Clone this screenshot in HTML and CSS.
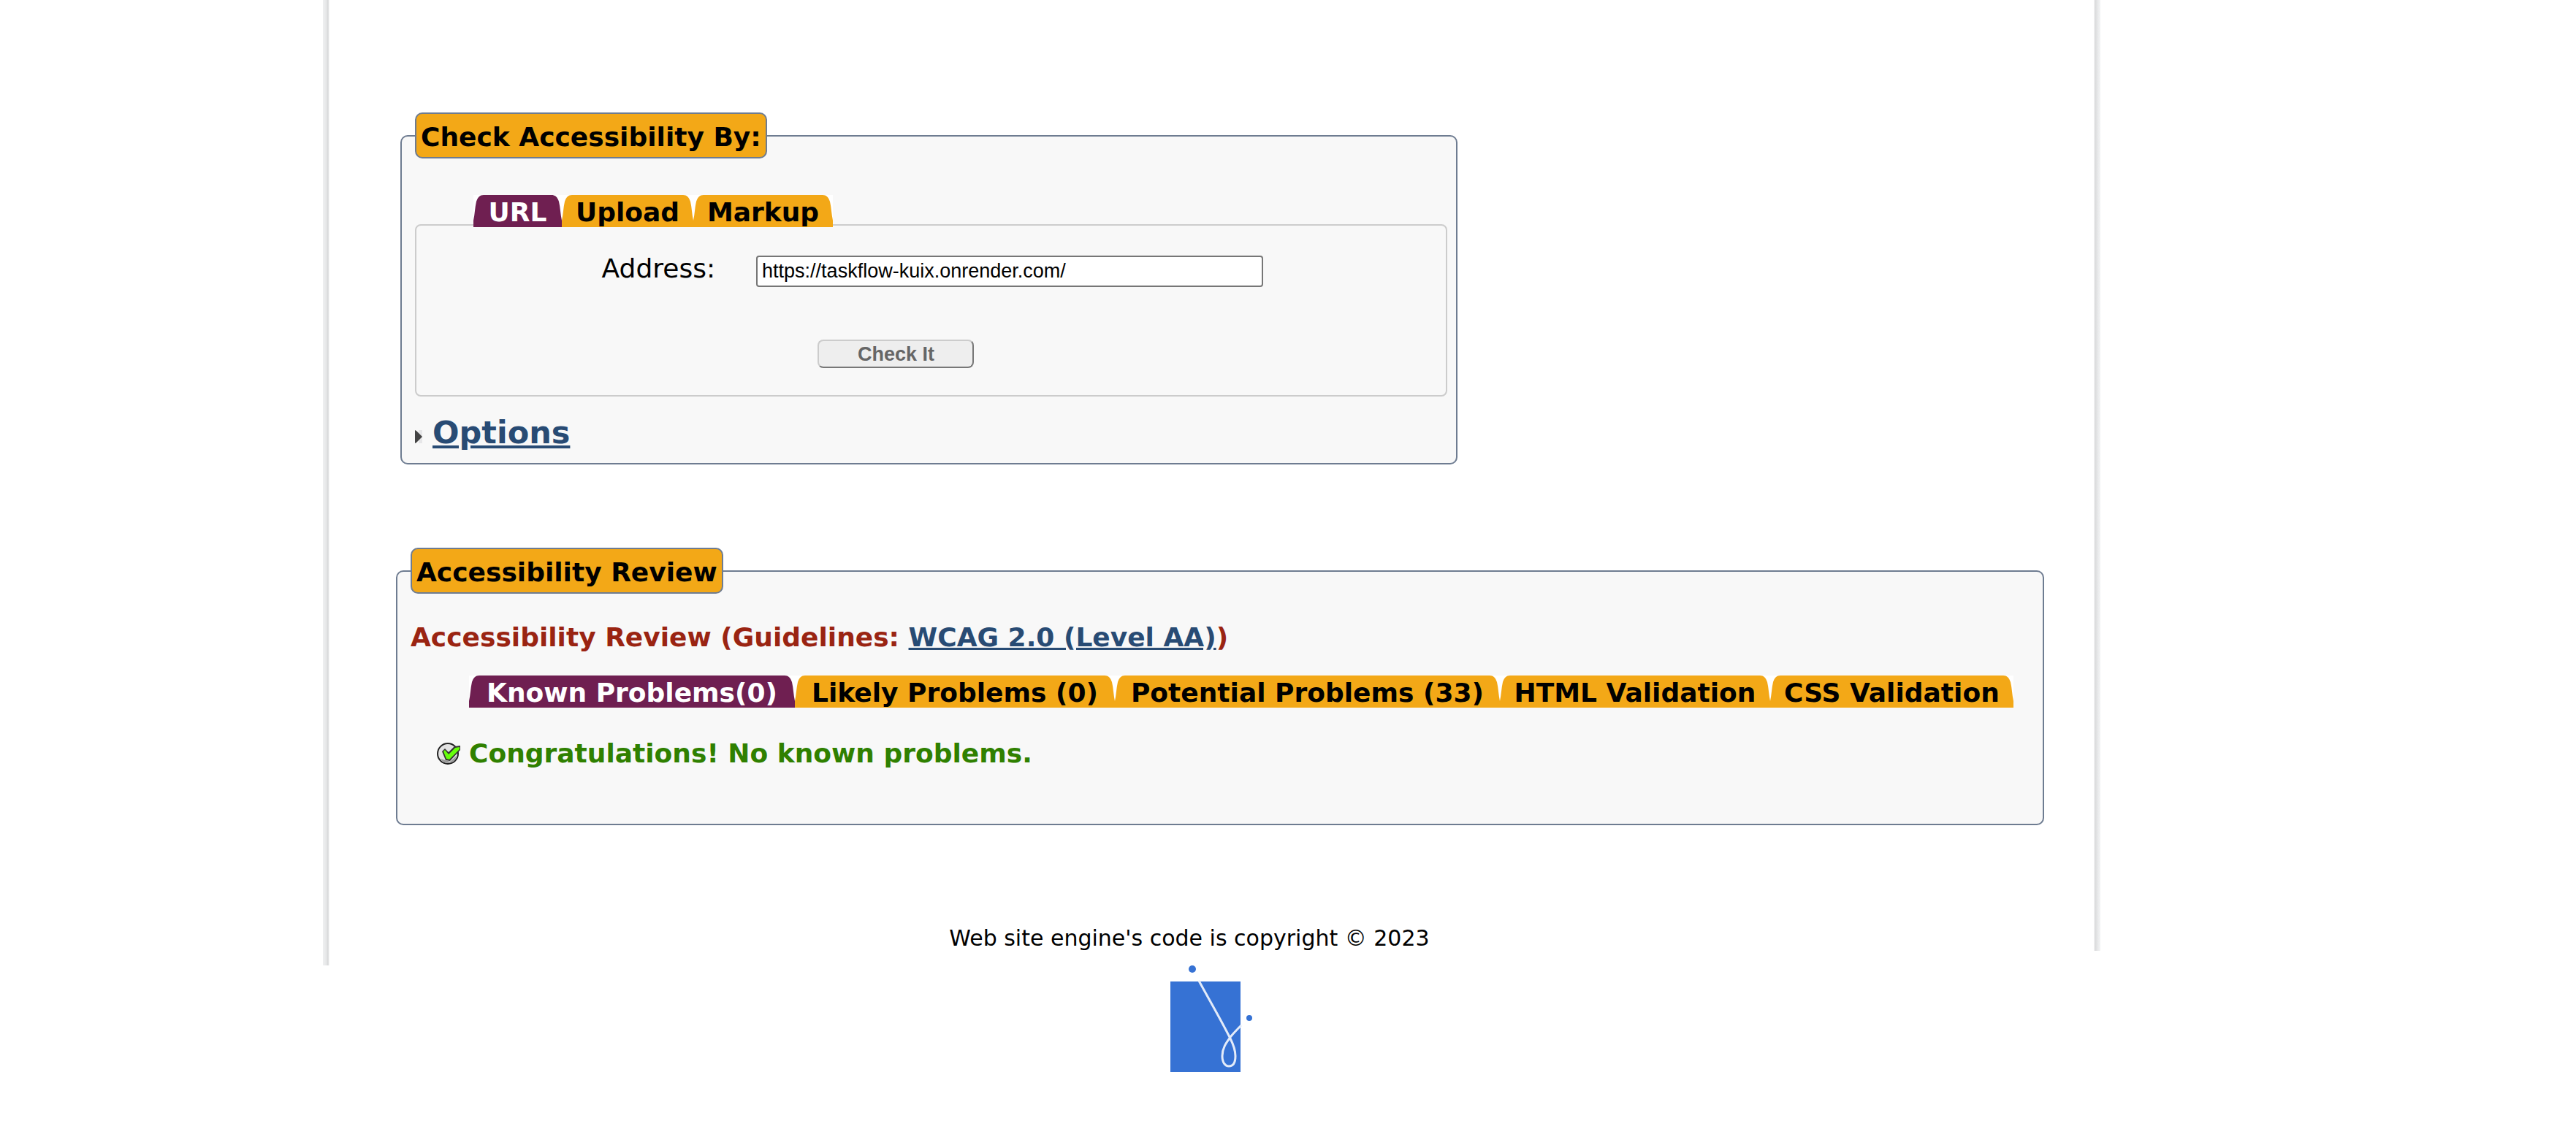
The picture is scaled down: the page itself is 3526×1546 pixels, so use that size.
FILE: index.html
```html
<!DOCTYPE html>
<html lang="en">
<head>
<meta charset="utf-8">
<title>Accessibility Checker</title>
<link rel="stylesheet" href="styles.css">
</head>
<body>
<svg class="defs" aria-hidden="true">
  <symbol id="cap-left" viewBox="0 0 14 44"><path d="M0 44V35C2 26 2 17 4 9C6 3 9 0 14 0V44Z"/></symbol>
  <symbol id="cap-right" viewBox="0 0 14 44"><path d="M14 44V35C12 26 12 17 10 9C8 3 5 0 0 0V44Z"/></symbol>
</svg>
<div class="page">
  <div class="rail rail-left"></div>
  <main class="content">
    <form>
      <fieldset class="box check">
        <legend>Check Accessibility By:</legend>
        <nav class="tabs input-tabs">
          <a class="tab active" href="#url"><svg class="cap"><use href="#cap-left"/></svg><span>URL</span><svg class="cap"><use href="#cap-right"/></svg></a>
          <a class="tab" href="#upload"><svg class="cap"><use href="#cap-left"/></svg><span>Upload</span><svg class="cap"><use href="#cap-right"/></svg></a>
          <a class="tab" href="#markup"><svg class="cap"><use href="#cap-left"/></svg><span>Markup</span><svg class="cap"><use href="#cap-right"/></svg></a>
        </nav>
        <div class="panel" id="url">
          <div class="field">
            <label for="address">Address:</label>
            <input id="address" type="text" value="https://taskflow-kuix.onrender.com/">
          </div>
          <button class="submit" type="button">Check It</button>
        </div>
        <h2 class="options">
          <svg class="arrow" viewBox="0 0 10 18" aria-hidden="true"><path d="M5 0H10V18H5Z" fill="#e6e6e8"/><path d="M0 0L2 1L10 9L2 17L0 18Z" fill="#444"/></svg>
          <a href="#options">Options</a>
        </h2>
      </fieldset>
    </form>
    <fieldset class="box review">
      <legend>Accessibility Review</legend>
      <h3 class="guidelines">Accessibility Review (Guidelines: <a href="#wcag">WCAG 2.0 (Level AA)</a>)</h3>
      <nav class="tabs result-tabs">
        <a class="tab active" href="#known"><svg class="cap"><use href="#cap-left"/></svg><span>Known Problems(0)</span><svg class="cap"><use href="#cap-right"/></svg></a>
        <a class="tab" href="#likely"><svg class="cap"><use href="#cap-left"/></svg><span>Likely Problems (0)</span><svg class="cap"><use href="#cap-right"/></svg></a>
        <a class="tab" href="#potential"><svg class="cap"><use href="#cap-left"/></svg><span>Potential Problems (33)</span><svg class="cap"><use href="#cap-right"/></svg></a>
        <a class="tab" href="#html"><svg class="cap"><use href="#cap-left"/></svg><span>HTML Validation</span><svg class="cap"><use href="#cap-right"/></svg></a>
        <a class="tab" href="#css"><svg class="cap"><use href="#cap-left"/></svg><span>CSS Validation</span><svg class="cap"><use href="#cap-right"/></svg></a>
      </nav>
      <p class="result" id="known">
        <svg class="tick" viewBox="0 0 32 30" aria-hidden="true">
          <circle cx="15" cy="15" r="14" fill="#e2e2e2" stroke="#222" stroke-width="2"/>
          <path d="M5 22A12 12 0 0 0 27 18L18 26Z" fill="#999"/>
          <path d="M7 12L11 8L16 13L24 5L32 4V10L18 25L12 24Z" fill="#333"/>
          <path d="M9 12L11 10L16 16L25 7L31 6V9L17 23L13 22Z" fill="#66ff0a"/>
        </svg>
        <span>Congratulations! No known problems.</span>
      </p>
    </fieldset>
    <p class="copyright">Web site engine's code is copyright © 2023</p>
  </main>
  <div class="rail rail-right"></div>
</div>
<footer class="footer">
  <svg class="logo" viewBox="0 0 112 146" role="img" aria-label="Logo">
    <rect x="0" y="22" width="96" height="124" fill="#3672d4"/>
    <circle cx="30" cy="5" r="5" fill="#3672d4"/>
    <circle cx="108" cy="72" r="4" fill="#3672d4"/>
    <path d="M39 21C52 45 68 72 82 100C87 110 89 117 89 124C89 134 85 138 80 138C75 138 71 133 71 124C71 112 78 104 83 97C88 91 92 87 97 82" fill="none" stroke="#e3ebf9" stroke-width="3"/>
  </svg>
</footer>
</body>
</html>
```
FILE: styles.css
```css
* {
  box-sizing: border-box;
}

body {
  margin: 0;
  background: #fff;
  color: #000;
  font-family: Verdana, "DejaVu Sans", sans-serif;
  font-size: 36px;
  line-height: 42px;
}

.defs {
  display: none;
}

a {
  color: #284b74;
}

.page {
  display: grid;
  grid-template-columns: 9px 1fr 9px;
  width: 69%;
  margin-left: 442px;
}

.rail-left {
  background: linear-gradient(to right, #eff0f1, #e6e7e8 50%, #d6d7d8 80%, #f4f4f5 90%);
}

.rail-right {
  margin-bottom: 20px;
  background: linear-gradient(to right, #f0f0f1 10%, #d9dadb 20%, #e8e9ea 60%, #f3f4f5);
}

.content {
  padding: 154px 68px 16px 91px;
}

.box {
  min-width: 0;
  margin: 0;
  border: 2px solid #6e7c91;
  border-radius: 10px;
  background: #f8f8f8;
}

.box legend {
  padding: 11px 6px 6px;
  border: 2px solid #6e7c91;
  border-radius: 10px;
  background: #f3a817;
  font-weight: bold;
}

.check {
  width: calc(64% + 3px);
  margin-left: 6px;
  padding: 50px 12px 16px 18px;
}

.review {
  margin-top: 114px;
  padding: 39px 20px 75px 18px;
}

.tabs {
  display: grid;
  margin-left: 80px;
}

.input-tabs {
  position: relative;
  grid-template-columns: 121fr 180fr 191fr;
  width: 492px;
  margin-bottom: -4px;
}

.result-tabs {
  grid-template-columns: 446fr 438fr 527fr 370fr 333fr;
  margin-top: 31px;
  margin-right: 20px;
}

.tab {
  display: flex;
  height: 44px;
  background: #fff;
  color: #000;
  fill: #f3a817;
  font-weight: bold;
  text-decoration: none;
}

.tab span {
  flex: 1;
  padding-top: 4px;
  background: #f3a817;
  line-height: 40px;
  text-align: center;
  white-space: nowrap;
}

.tab.active {
  color: #fff;
  fill: #6f1f51;
}

.tab.active span {
  background: #6f1f51;
}

.cap {
  flex: none;
  width: 14px;
  height: 44px;
}

.panel {
  padding: 38px 0 37px;
  border: 2px solid #ccc;
  border-radius: 8px;
}

.field {
  display: flex;
  align-items: baseline;
  gap: 56px;
  padding-left: 18%;
}

.field input {
  width: 694px;
  height: 43px;
  padding: 0 6px;
  border: 2px solid #767676;
  border-radius: 4px;
  background: #fff;
  color: #000;
  font-family: Arial, "Liberation Sans", sans-serif;
  font-size: 27px;
}

.submit {
  display: block;
  width: 214px;
  height: 39px;
  margin: 72px 0 0 39%;
  padding: 0;
  border: 2px solid;
  border-color: #ccc #777 #777 #ccc;
  border-radius: 8px;
  background: #eee;
  color: #666;
  font-family: Arial, "Liberation Sans", sans-serif;
  font-size: 27px;
  font-weight: bold;
  line-height: 30px;
}

.options {
  display: flex;
  align-items: center;
  gap: 14px;
  margin: 23px 0 0;
  font-size: 43px;
  line-height: 52px;
}

.arrow {
  width: 10px;
  height: 18px;
  margin-top: 12px;
}

.guidelines {
  margin: 0;
  color: #9a2412;
  font-size: 36px;
}

.result {
  display: flex;
  align-items: center;
  gap: 12px;
  margin: 42px 0 0 36px;
  color: #2f8000;
  font-weight: bold;
}

.tick {
  width: 32px;
  height: 30px;
}

.copyright {
  margin: 134px 0 0;
  padding-right: 84px;
  font-size: 30px;
  text-align: center;
}

.footer {
  display: flex;
  justify-content: center;
  width: 69%;
  margin-left: 442px;
}

.logo {
  width: 112px;
  height: 146px;
}
```
